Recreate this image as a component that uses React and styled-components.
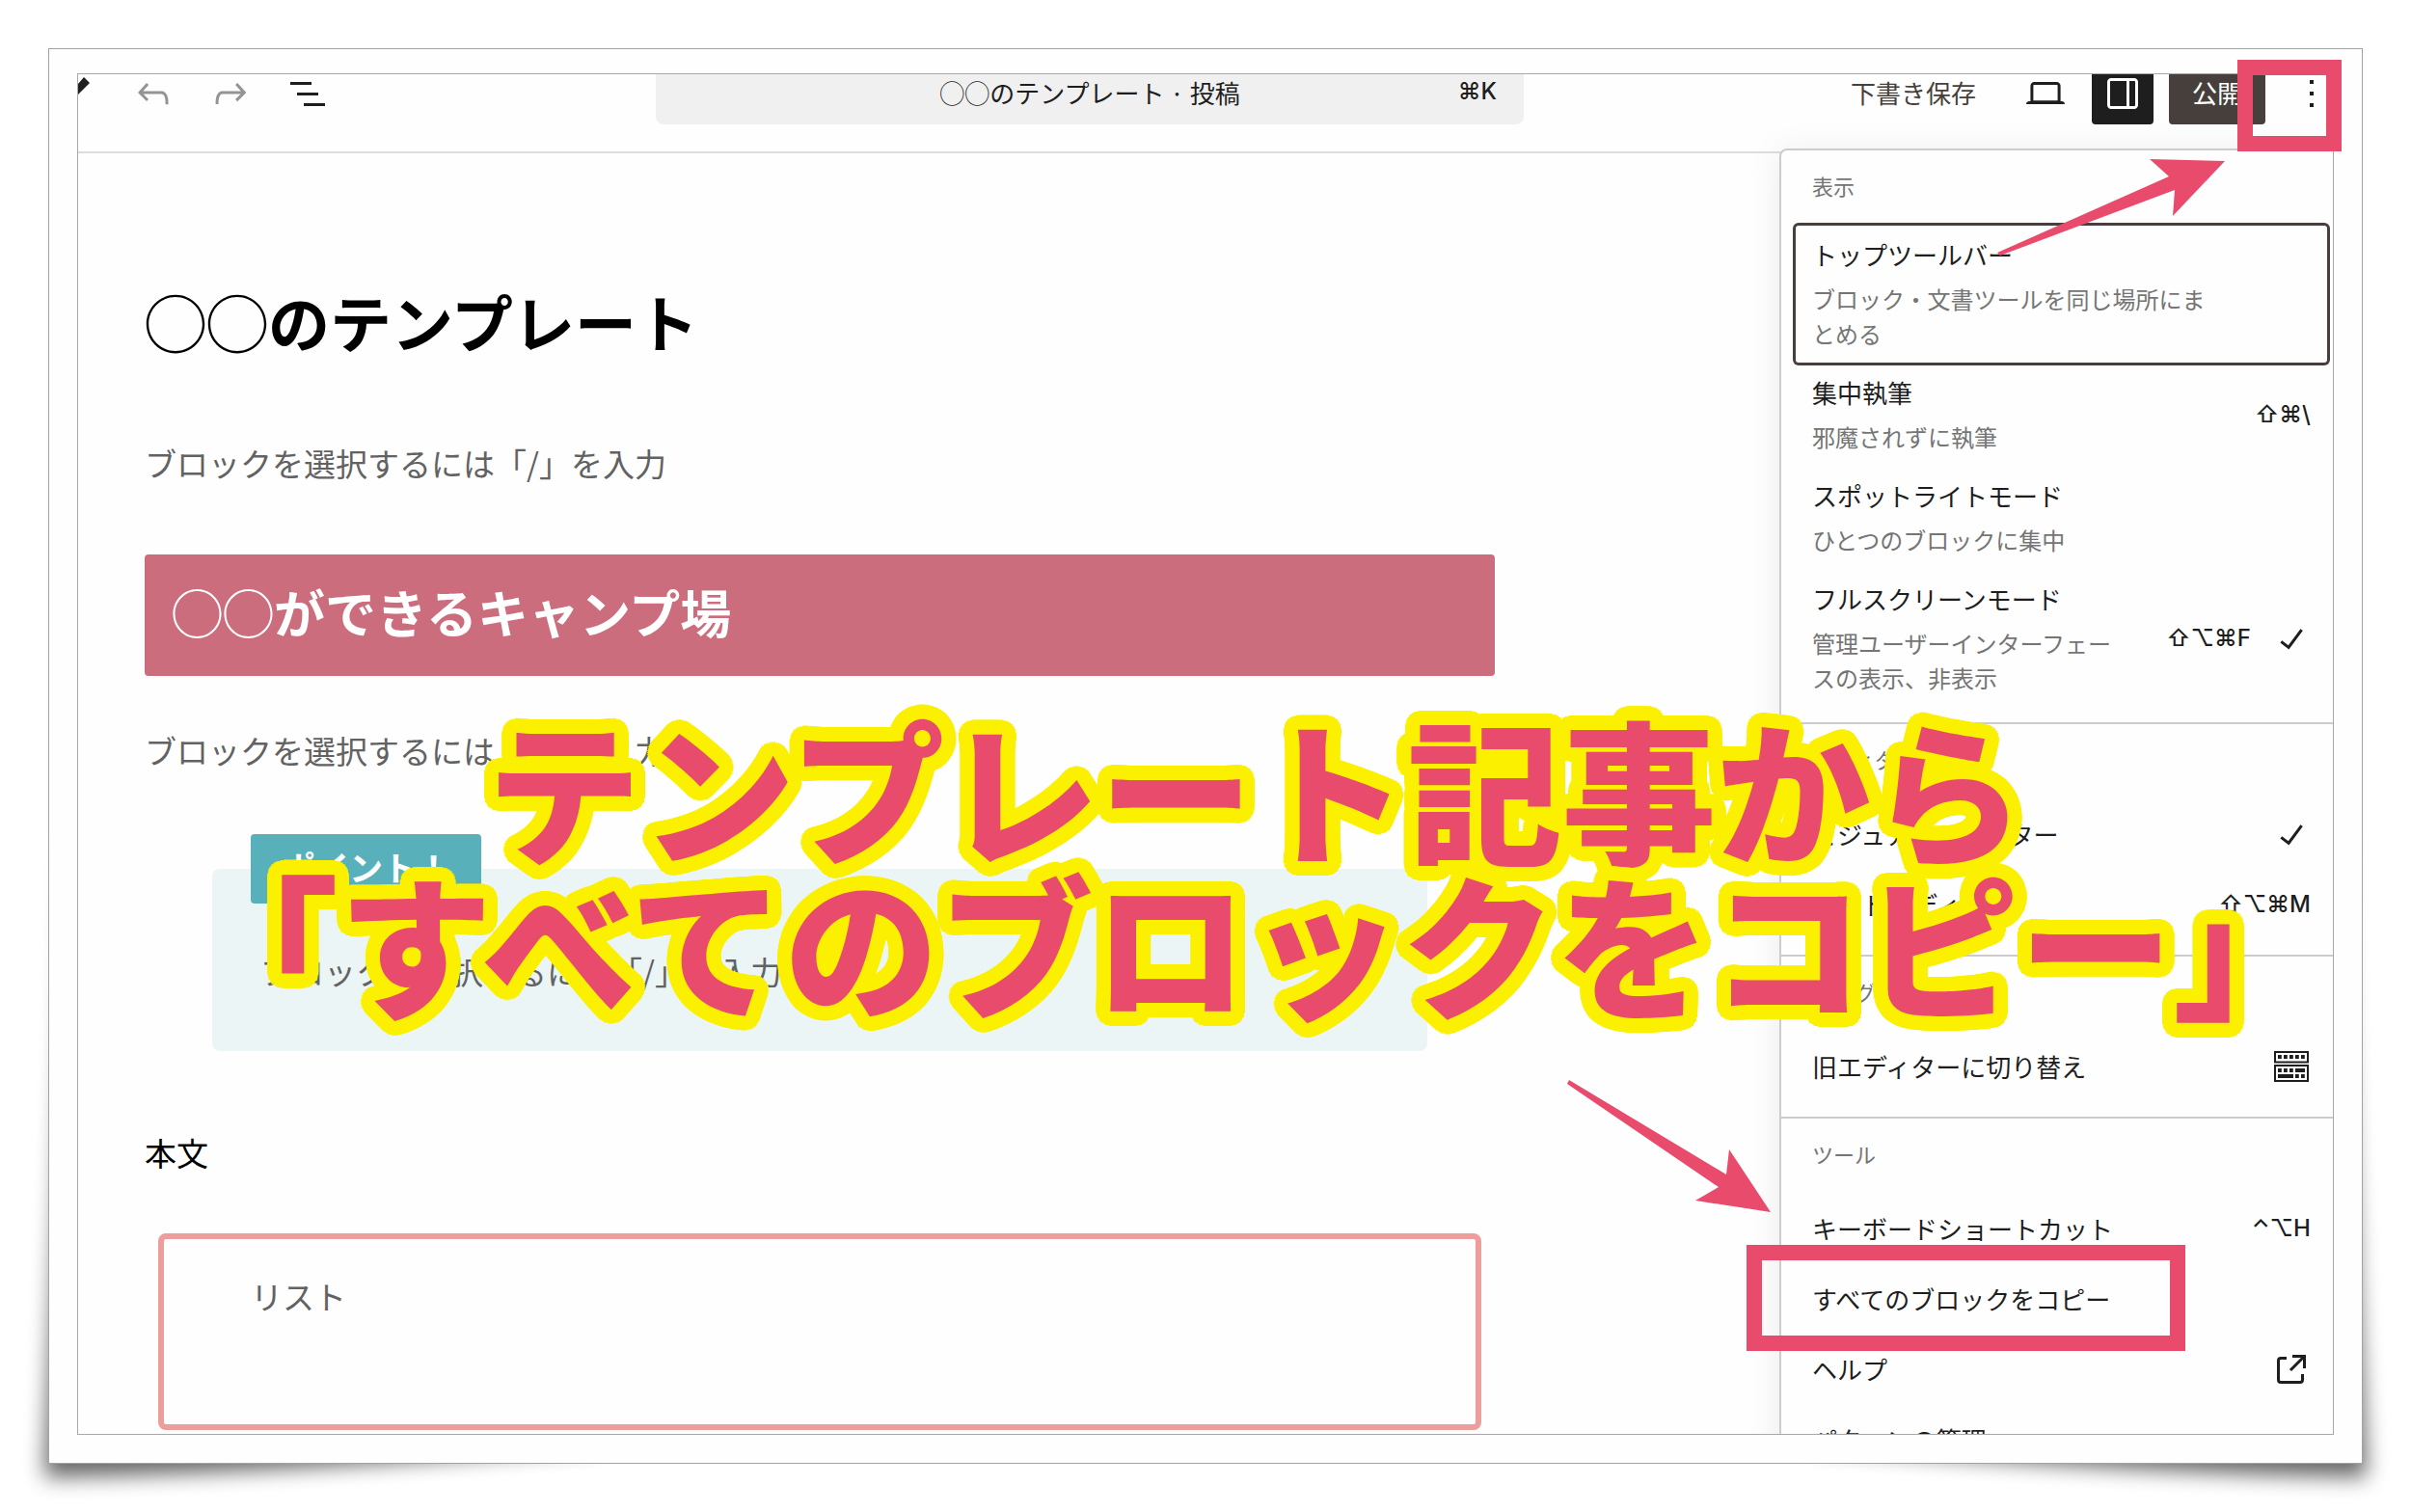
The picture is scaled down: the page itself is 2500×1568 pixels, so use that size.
import React from 'react';
import styled, { createGlobalStyle } from 'styled-components';

const GlobalStyle = createGlobalStyle`
  * {
    box-sizing: border-box;
  }

  body {
    margin: 0;
    background-color: #fff;
    color: #1e1e1e;
    font-family: 'Noto Sans CJK JP', sans-serif;
  }

  button {
    border: none;
    padding: 0;
    background: none;
    color: inherit;
    font: inherit;
    cursor: pointer;
  }

  h1, h2, p {
    margin: 0;
  }
`;

const Page = styled.div`
  position: relative;
  display: flex;
  height: 100vh;
  padding: 50px;
  overflow: hidden;
`;

const CornerShadow = styled.svg`
  position: absolute;
  bottom: 0;
  ${({ $side }) => $side}: 0;
  ${({ $side }) => $side === 'right' && 'transform: scaleX(-1);'}
`;

const Frame = styled.div`
  position: relative;
  display: flex;
  flex: 1;
  min-width: 0;
  padding: 25px 29px 29px;
  border: 1px solid #a3a3a3;
  background-color: #fefefe;
`;

const Screen = styled.div`
  position: relative;
  z-index: 0;
  flex: 1;
  min-width: 0;
  border: 1px solid #a8a8a8;
  overflow: hidden;
`;

/* The top of the bar is cut off by the screen edge */
const Header = styled.header`
  display: flex;
  align-items: center;
  height: 122px;
  margin: -40px -10px 0 0;
  border-bottom: 2px solid #ddd;
`;

const Tools = styled.div`
  display: flex;
  align-items: center;
  gap: 32px;
  width: 599px;
`;

const ToolButton = styled.button`
  display: flex;
  width: 48px;
  height: 48px;
  color: ${({ $muted }) => ($muted ? '#949494' : '#1e1e1e')};
`;

const CommandBar = styled.button`
  display: grid;
  grid-template-columns: 1fr auto 1fr;
  align-items: center;
  flex: 0 1 900px;
  height: 64px;
  padding: 0 28px 4px;
  border-radius: 8px;
  background-color: #f0f0f0;
  font-size: 26px;
`;

const CommandTitle = styled.span`
  grid-column: 2;
`;

const Shortcut = styled.span`
  justify-self: end;
  font-family: Inter, 'DejaVu Sans', sans-serif;
  font-size: 24px;
  font-weight: 500;
  line-height: 36px;
  white-space: nowrap;
`;

const Actions = styled.div`
  display: flex;
  align-items: center;
  gap: 16px;
  margin-left: auto;
`;

const TextButton = styled.button`
  height: 64px;
  padding: 0 24px 4px;
  border-radius: 4px;
  background-color: ${({ $primary }) => ($primary ? '#463f3b' : 'transparent')};
  color: ${({ $primary }) => ($primary ? '#fff' : '#463f3b')};
  font-size: 26px;
`;

const IconButton = styled.button`
  display: flex;
  align-items: center;
  justify-content: center;
  width: 64px;
  height: 64px;
  border-radius: 4px;
  background-color: ${({ $active }) => ($active ? '#1e1e1e' : 'transparent')};
  color: ${({ $active }) => ($active ? '#fff' : '#1e1e1e')};
`;

const Content = styled.main`
  display: flex;
  flex-direction: column;
  max-width: 1469px;
  padding: 125px 0 0 69px;
`;

const PostTitle = styled.h1`
  margin-bottom: 71px;
  color: #000;
  font-size: 64px;
  font-weight: 700;
  line-height: 96px;
`;

const Paragraph = styled.p`
  color: ${({ $filled }) => ($filled ? '#000' : '#626262')};
  font-size: 33px;
  line-height: 58px;
`;

const Heading = styled.h2`
  margin: 66px 0 48px;
  padding: 0 28px 8px;
  border-radius: 4px;
  background-color: #cb6d7c;
  color: #fff;
  font-size: 53px;
  font-weight: 700;
  line-height: 118px;
`;

const PointBlock = styled.section`
  display: flex;
  flex-direction: column;
  align-items: flex-start;
  margin: 58px 70px 76px;
`;

const PointLabel = styled.div`
  z-index: 1;
  margin: 0 0 -36px 40px;
  padding: 0 32px 4px;
  border-radius: 4px;
  background-color: #58b1ba;
  color: #fff;
  font-size: 35px;
  font-weight: 700;
  line-height: 68px;
`;

const PointBody = styled.div`
  width: 100%;
  padding: 77px 50px 54px;
  border-radius: 8px;
  background-color: #ebf5f5;
`;

const ListBox = styled.div`
  height: 204px;
  margin: 55px 14px 0;
  padding: 30px 90px;
  border: 6px solid #ed9d9c;
  border-radius: 8px;
`;

const Menu = styled.div`
  position: absolute;
  top: 77px;
  right: -11px;
  width: 585px;
  border: 2px solid #ccc;
  border-radius: 8px;
  background-color: #fefefe;
  box-shadow: 0 4px 36px rgba(0, 0, 0, 0.08);
`;

const MenuGroup = styled.div`
  display: flex;
  flex-direction: column;
  gap: 1px;
  padding: 0 12px 16px;

  & + & {
    border-top: 2px solid #ccc;
  }
`;

const GroupLabel = styled.div`
  margin: 13px 0 18px;
  padding: 0 20px;
  color: #757575;
  font-size: 22px;
  line-height: 46px;
`;

const MenuItem = styled.button`
  display: flex;
  align-items: center;
  gap: 18px;
  padding: ${({ $tall }) => ($tall ? '12px' : '18px')} 20px;
  border-radius: 6px;
  text-align: left;

  ${({ $focused }) => $focused && `
    margin: -3px 0;
    padding: 15px 20px;
    box-shadow: inset 0 0 0 3px #463f3b;
  `}

  & > svg {
    flex-shrink: 0;
    margin: -6px -4px -6px 0;
  }
`;

const ItemText = styled.span`
  display: flex;
  flex-direction: column;
  gap: 10px;
  flex: 0 1 440px;
  min-width: 0;
  margin-right: auto;
  padding-right: 30px;
`;

const ItemTitle = styled.span`
  font-size: 26px;
  line-height: 36px;
  white-space: nowrap;
`;

const ItemInfo = styled.span`
  color: #757575;
  font-size: 24px;
  line-height: 36px;
`;

/* Ring of hard shadows, gives the letters an outline with round corners */
const outline = (radius, color) =>
  Array.from({ length: 48 }, (_, i) => {
    const angle = (i / 48) * Math.PI * 2;
    return `${Math.round(Math.cos(angle) * radius)}px ${Math.round(Math.sin(angle) * radius)}px 0 ${color}`;
  }).join(', ');

const Headline = styled.div`
  position: absolute;
  top: 684px;
  left: 104px;
  right: 0;
  color: #e94b6d;
  font-size: 160px;
  font-weight: 900;
  line-height: 160px;
  text-align: center;
  white-space: nowrap;
  text-shadow: ${outline(15, '#faf000')}, ${outline(8, '#faf000')};
`;

const Marker = styled.div`
  position: absolute;
  top: ${({ $top }) => $top}px;
  right: ${({ $right }) => $right}px;
  width: ${({ $width }) => $width}px;
  height: ${({ $height }) => $height}px;
  border: 16px solid #e94b6d;
`;

const Arrow = styled.svg`
  position: absolute;
  top: ${({ $top }) => $top}px;
  right: ${({ $right }) => $right}px;
  fill: #e94b6d;
`;

const icons = {
  undo: 'M18.3 11.7c-.6-.6-1.4-.9-2.3-.9H6.7l2.9-3.3-1.1-1-4.5 5L8.5 16l1-1-2.7-2.7H16c.5 0 .9.2 1.3.5 1 1 1 3.4 1 4.5v.3h1.5v-.2c0-1.5 0-4.3-1.5-5.7z',
  redo: 'M15.6 6.5l-1.1 1 2.9 3.3H8c-.9 0-1.7.3-2.3.9-1.4 1.5-1.4 4.2-1.4 5.6v.2h1.5v-.3c0-1.1 0-3.5 1-4.5.3-.3.7-.5 1.3-.5h9.2L14.5 15l1.1 1.1 4.6-4.6-4.6-5z',
  listView: 'M3 6h11v1.5H3V6Zm3.5 5.5h11V13h-11v-1.5ZM21 17H10v1.5h11V17Z',
  desktop: 'M20.5 16h-.7V8c0-1.1-.9-2-2-2H6.2c-1.1 0-2 .9-2 2v8h-.7c-.8 0-1.5.7-1.5 1.5h20c0-.8-.7-1.5-1.5-1.5zM5.7 8c0-.3.2-.5.5-.5h11.6c.3 0 .5.2.5.5v7.6H5.7V8z',
  sidebar: 'M18 4H6c-1.1 0-2 .9-2 2v12c0 1.1.9 2 2 2h12c1.1 0 2-.9 2-2V6c0-1.1-.9-2-2-2zm-4 14.5H6c-.3 0-.5-.2-.5-.5V6c0-.3.2-.5.5-.5h8v13zm4.5-.5c0 .3-.2.5-.5.5h-2.5v-13H18c.3 0 .5.2.5.5v12z',
  more: 'M13 19h-2v-2h2v2zm0-6h-2v-2h2v2zm0-6h-2V5h2v2z',
  check: 'M16.7 7.1l-6.3 8.5-3.3-2.5-.9 1.2 4.5 3.4L17.9 8z',
  external: 'M19.5 4.5h-7V6h4.44l-5.97 5.97 1.06 1.06L18 7.06v4.44h1.5v-7Zm-13 1a2 2 0 0 0-2 2v10a2 2 0 0 0 2 2h10a2 2 0 0 0 2-2v-3H17v3a.5.5 0 0 1-.5.5h-10a.5.5 0 0 1-.5-.5v-10a.5.5 0 0 1 .5-.5h3V5.5h-3Z',
  keyboard: 'M3 4h18v6.2H3zM4 5v4.2h16V5zM5 6h1.9v2H5zm3 0h1.9v2H8zm3 0h1.9v2H11zm3 0h1.9v2H14zm3 0h1.9v2H17zM3 11h18v9H3zM4 12v7h16v-7zM5 13h1.9v2H5zm3 0h1.9v2H8zm3 0h1.9v2H11zm3 0h5v2h-5zM5 16h8v2H5zm9 0h1.9v2H14zm3 0h1.9v2H17z',
};

function Icon({ name }) {
  return (
    <svg width="48" height="48" viewBox="0 0 24 24" fill="currentColor" fillRule="evenodd" aria-hidden="true">
      <path d={icons[name]} />
    </svg>
  );
}

const menuGroups = [
  {
    label: '表示',
    items: [
      { title: 'トップツールバー', info: 'ブロック・文書ツールを同じ場所にまとめる', focused: true },
      { title: '集中執筆', info: '邪魔されずに執筆', shortcut: '⇧⌘\\' },
      { title: 'スポットライトモード', info: 'ひとつのブロックに集中' },
      { title: 'フルスクリーンモード', info: '管理ユーザーインターフェースの表示、非表示', shortcut: '⇧⌥⌘F', icon: 'check' },
    ],
  },
  {
    label: 'エディター',
    items: [
      { title: 'ビジュアルエディター', icon: 'check' },
      { title: 'コードエディター', shortcut: '⇧⌥⌘M' },
    ],
  },
  {
    label: 'プラグイン',
    items: [{ title: '旧エディターに切り替え', icon: 'keyboard' }],
  },
  {
    label: 'ツール',
    items: [
      { title: 'キーボードショートカット', shortcut: '⌃⌥H' },
      { title: 'すべてのブロックをコピー' },
      { title: 'ヘルプ', icon: 'external' },
      { title: 'パターンの管理' },
    ],
  },
];

function Shadow({ side }) {
  return (
    <CornerShadow $side={side} width="800" height="900" viewBox="0 0 800 900" aria-hidden="true">
      <filter id={`blur-${side}`} x="-20%" y="-20%" width="140%" height="140%">
        <feGaussianBlur stdDeviation="11" />
      </filter>
      <path
        d="M72 200Q60 560 46 864Q280 860 620 832L620 200z"
        fill="#000"
        opacity="0.6"
        filter={`url(#blur-${side})`}
      />
    </CornerShadow>
  );
}

function EditorHeader() {
  return (
    <Header>
      <Tools>
        <svg width="22" height="48" viewBox="0 0 22 48" fill="#1e1e1e" aria-hidden="true">
          <path d="M6 7l6 6L0 25V14z" />
        </svg>
        <ToolButton $muted aria-label="元に戻す"><Icon name="undo" /></ToolButton>
        <ToolButton $muted aria-label="やり直す"><Icon name="redo" /></ToolButton>
        <ToolButton aria-label="リスト表示"><Icon name="listView" /></ToolButton>
      </Tools>
      <CommandBar>
        <CommandTitle>◯◯のテンプレート · 投稿</CommandTitle>
        <Shortcut>⌘K</Shortcut>
      </CommandBar>
      <Actions>
        <TextButton>下書き保存</TextButton>
        <IconButton aria-label="表示"><Icon name="desktop" /></IconButton>
        <IconButton $active aria-label="設定"><Icon name="sidebar" /></IconButton>
        <TextButton $primary>公開</TextButton>
        <IconButton aria-label="オプション"><Icon name="more" /></IconButton>
      </Actions>
    </Header>
  );
}

function OptionsMenu() {
  return (
    <Menu>
      {menuGroups.map((group) => (
        <MenuGroup key={group.label}>
          <GroupLabel>{group.label}</GroupLabel>
          {group.items.map((item) => (
            <MenuItem key={item.title} $tall={Boolean(item.info)} $focused={item.focused}>
              <ItemText>
                <ItemTitle>{item.title}</ItemTitle>
                {item.info && <ItemInfo>{item.info}</ItemInfo>}
              </ItemText>
              {item.shortcut && <Shortcut>{item.shortcut}</Shortcut>}
              {item.icon && <Icon name={item.icon} />}
            </MenuItem>
          ))}
        </MenuGroup>
      ))}
    </Menu>
  );
}

function App() {
  return (
    <Page>
      <GlobalStyle />
      <Shadow side="left" />
      <Shadow side="right" />
      <Frame>
        <Screen>
          <EditorHeader />
          <Content>
            <PostTitle>◯◯のテンプレート</PostTitle>
            <Paragraph>ブロックを選択するには「/」を入力</Paragraph>
            <Heading>◯◯ができるキャンプ場</Heading>
            <Paragraph>ブロックを選択するには「/」を入力</Paragraph>
            <PointBlock>
              <PointLabel>ポイント！</PointLabel>
              <PointBody>
                <Paragraph>ブロックを選択するには「/」を入力</Paragraph>
              </PointBody>
            </PointBlock>
            <Paragraph $filled>本文</Paragraph>
            <ListBox>
              <Paragraph>リスト</Paragraph>
            </ListBox>
          </Content>
          <OptionsMenu />
        </Screen>

        <Marker $top={11} $right={21} $width={108} $height={95} />
        <Arrow $top={113} $right={141} width="238" height="104" viewBox="2070 164 238 104">
          <path d="M2071 262L2249 183L2229 165L2307 167L2253 224L2255 197L2074 265Z" />
        </Arrow>
        <Marker $top={1240} $right={183} $width={455} $height={110} />
        <Arrow $top={1069} $right={611} width="214" height="140" viewBox="1624 1120 214 140">
          <path d="M1627 1120L1790 1218L1793 1192L1836 1257L1758 1245L1782 1231L1625 1124Z" />
        </Arrow>
        <Headline>
          テンプレート記事から
          <br />
          「すべてのブロックをコピー」
        </Headline>
      </Frame>
    </Page>
  );
}

export default App;
